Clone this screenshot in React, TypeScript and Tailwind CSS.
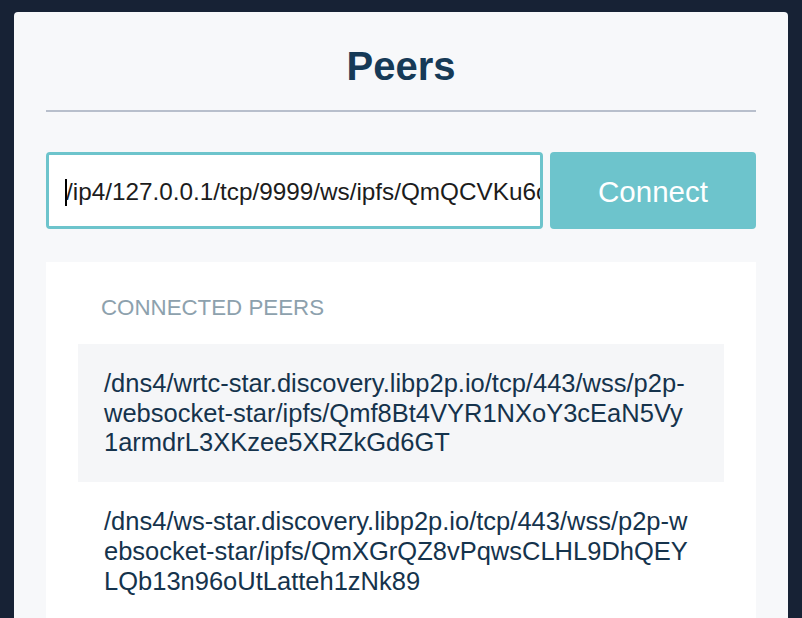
import React from "react";

const peers: string[][] = [
  [
    "/dns4/wrtc-star.discovery.libp2p.io/tcp/443/wss/p2p-",
    "websocket-star/ipfs/Qmf8Bt4VYR1NXoY3cEaN5Vy",
    "1armdrL3XKzee5XRZkGd6GT",
  ],
  [
    "/dns4/ws-star.discovery.libp2p.io/tcp/443/wss/p2p-w",
    "ebsocket-star/ipfs/QmXGrQZ8vPqwsCLHL9DhQEY",
    "LQb13n96oUtLatteh1zNk89",
  ],
];

export default function App() {
  return (
    <div
      className="h-screen w-full overflow-hidden bg-[#172235] pt-[12px] px-[14px]"
      style={{ fontFamily: '"Liberation Sans", Arial, Helvetica, sans-serif' }}
    >
      <div className="min-h-full rounded-t-[4px] bg-[#f7f8fa] px-[32px] pt-[30px]">
        <h1 className="text-center text-[40px] leading-[48px] font-bold text-[#163a57]">
          Peers
        </h1>
        <div className="mt-[20px] h-[2px] bg-[#b8bfcc]" />

        <div className="mt-[40px] flex gap-[7px]">
          <div className="relative h-[77px] w-[497px] overflow-hidden rounded-[4px] border-[3px] border-[#6dc4cc] bg-white">
            <input
              readOnly
              value="/ip4/127.0.0.1/tcp/9999/ws/ipfs/QmQCVKu6ox1WnBwM1rxVUJ9dYrwe"
              className="h-full w-full bg-white pl-[17px] pr-0 pt-[2px] text-[24.3px] text-[#1c1c1c] outline-none"
              style={{ fontFamily: '"Liberation Sans", Arial, Helvetica, sans-serif' }}
            />
            <span className="absolute left-[16px] top-[24px] h-[27px] w-[2px] bg-black" />
          </div>
          <button className="flex h-[77px] flex-1 items-center justify-center rounded-[4px] bg-[#6dc4cc] pt-[3px] text-[29.5px] text-white">
            Connect
          </button>
        </div>

        <div className="mt-[33px] bg-white px-[32px] pt-[33px] pb-[32px]">
          <div className="pl-[23px] text-[22.3px] leading-[26px] text-[#8da1ad]">
            CONNECTED PEERS
          </div>
          <ul className="mt-[23px]">
            {peers.map((lines, i) => (
              <li
                key={i}
                className={
                  i % 2 === 0
                    ? "bg-[#f5f6f8] pl-[26px] pr-[20px] pt-[25px] pb-[24px] text-[25.5px] leading-[29.7px] text-[#15334c]"
                    : "bg-white pl-[26px] pr-[20px] pt-[25px] pb-[24px] text-[25.5px] leading-[29.7px] text-[#15334c]"
                }
              >
                {lines.map((l, j) => (
                  <div key={j} className="whitespace-nowrap">
                    {l}
                  </div>
                ))}
              </li>
            ))}
          </ul>
        </div>
      </div>
    </div>
  );
}
